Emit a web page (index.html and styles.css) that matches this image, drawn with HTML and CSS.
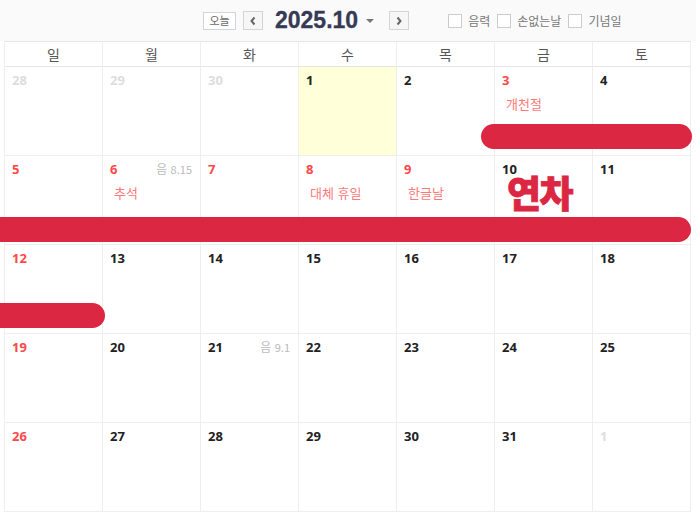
FILE: index.html
```html
<!DOCTYPE html>
<html lang="ko">
<head>
<meta charset="utf-8">
<link rel="stylesheet" href="styles.css">
</head>
<body>
<div class="page">
  <div class="toolbar">
    <button class="btn today-btn">오늘</button>
    <button class="btn nav-btn"><svg width="8" height="10" viewBox="0 0 8 10"><path d="M5.5 1.5 L2.5 5 L5.5 8.5" fill="none" stroke="#666" stroke-width="2"/></svg></button>
    <div class="title">2025.10</div>
    <span class="caret"></span>
    <button class="btn nav-btn next"><svg width="8" height="10" viewBox="0 0 8 10"><path d="M2.5 1.5 L5.5 5 L2.5 8.5" fill="none" stroke="#666" stroke-width="2"/></svg></button>
    <div class="opts">
      <label class="opt"><span class="box"></span>음력</label>
      <label class="opt"><span class="box"></span>손없는날</label>
      <label class="opt"><span class="box"></span>기념일</label>
    </div>
  </div>
  <div class="cal">
    <div class="grid">
      <div class="wd">일</div><div class="wd">월</div><div class="wd">화</div><div class="wd">수</div><div class="wd">목</div><div class="wd">금</div><div class="wd">토</div>

      <div class="cell"><span class="num other">28</span></div>
      <div class="cell"><span class="num other">29</span></div>
      <div class="cell"><span class="num other">30</span></div>
      <div class="cell today"><span class="num">1</span></div>
      <div class="cell"><span class="num">2</span></div>
      <div class="cell"><span class="num red">3</span><span class="hol">개천절</span></div>
      <div class="cell"><span class="num">4</span></div>

      <div class="cell"><span class="num red">5</span></div>
      <div class="cell"><span class="num red">6</span><span class="lunar">음 <small>8.15</small></span><span class="hol">추석</span></div>
      <div class="cell"><span class="num red">7</span></div>
      <div class="cell"><span class="num red">8</span><span class="hol">대체 휴일</span></div>
      <div class="cell"><span class="num red">9</span><span class="hol">한글날</span></div>
      <div class="cell"><span class="num">10</span></div>
      <div class="cell"><span class="num">11</span></div>

      <div class="cell"><span class="num red">12</span></div>
      <div class="cell"><span class="num">13</span></div>
      <div class="cell"><span class="num">14</span></div>
      <div class="cell"><span class="num">15</span></div>
      <div class="cell"><span class="num">16</span></div>
      <div class="cell"><span class="num">17</span></div>
      <div class="cell"><span class="num">18</span></div>

      <div class="cell"><span class="num red">19</span></div>
      <div class="cell"><span class="num">20</span></div>
      <div class="cell"><span class="num">21</span><span class="lunar">음 <small>9.1</small></span></div>
      <div class="cell"><span class="num">22</span></div>
      <div class="cell"><span class="num">23</span></div>
      <div class="cell"><span class="num">24</span></div>
      <div class="cell"><span class="num">25</span></div>

      <div class="cell"><span class="num red">26</span></div>
      <div class="cell"><span class="num">27</span></div>
      <div class="cell"><span class="num">28</span></div>
      <div class="cell"><span class="num">29</span></div>
      <div class="cell"><span class="num">30</span></div>
      <div class="cell"><span class="num">31</span></div>
      <div class="cell"><span class="num other">1</span></div>
    </div>
  </div>
  <div class="bar bar1"></div>
  <div class="bar bar2"></div>
  <div class="bar bar3"></div>
  <div class="leave">연차</div>
</div>
</body>
</html>
```

FILE: styles.css
```css
* { box-sizing: border-box; }
html, body { margin: 0; padding: 0; background: #fff; overflow: hidden; }
body { font-family: "Noto Sans CJK KR", "Noto Sans", sans-serif; width: 696px; height: 515px; }
.page { position: relative; width: 696px; height: 515px; overflow: hidden; }

.toolbar {
  height: 41px;
  background: #fafafa;
  display: flex;
  align-items: center;
  padding-left: 203px;
}
.btn {
  border: 1px solid #d4d4d4;
  background: #fff;
  padding: 0;
  margin: 0;
  display: flex;
  align-items: center;
  justify-content: center;
  font-family: "Noto Sans CJK KR", sans-serif;
  color: #666;
}
.today-btn { width: 33px; height: 18px; font-size: 11px; line-height: 1; }
.nav-btn { width: 20px; height: 19px; margin-left: 7px; background: #f6f6f6; }
.nav-btn.next { margin-left: 15px; }
.title {
  margin-left: 12px;
  font-family: "Liberation Sans", Arial, sans-serif;
  font-weight: bold;
  font-size: 23px;
  color: #363a55;
  line-height: 1;
  -webkit-text-stroke: 0.3px #363a55;
}
.caret {
  margin-left: 8px;
  width: 0; height: 0;
  border-left: 4px solid transparent;
  border-right: 4px solid transparent;
  border-top: 4px solid #777;
}
.opts { display: flex; align-items: center; margin-left: 39px; gap: 7px; }
.opt { display: flex; align-items: center; font-size: 12px; color: #777; }
.box { width: 14px; height: 14px; border: 1px solid #ccc; background: #fff; margin-right: 6px; }

.cal { padding-left: 4px; }
.grid {
  display: grid;
  grid-template-columns: repeat(7, 98px);
  grid-template-rows: 25px repeat(5, 89px);
  width: 687px;
  border-top: 1px solid #e6e6e6;
  border-left: 1px solid #eee;
}
.wd {
  border-right: 1px solid #eee;
  border-bottom: 1px solid #e6e6e6;
  display: flex;
  align-items: center;
  justify-content: center;
  font-size: 14px;
  color: #555;
}
.cell {
  position: relative;
  border-right: 1px solid #eee;
  border-bottom: 1px solid #eee;
  padding: 4px 0 0 7px;
  display: flex;
  flex-direction: column;
}
.cell.today { background: #ffffd9; }
.num {
  font-size: 13px;
  font-weight: bold;
  color: #222;
  line-height: 18px;
  font-family: "Noto Sans", "Noto Sans CJK KR", sans-serif;
}
.num.red { color: #ff4848; }
.num.other { color: #ddd; }
.hol {
  margin: 6px 0 0 4px;
  font-size: 13px;
  color: #ff7878;
  line-height: 18px;
}
.lunar {
  position: absolute;
  top: 5px;
  right: 8px;
  font-size: 12px;
  color: #bbb;
  line-height: 16px;
}
.lunar small { font-size: 11px; }

.bar {
  position: absolute;
  height: 25px;
  background: #dc2743;
  border-radius: 13px;
}
.bar1 { left: 481px; top: 124px; width: 211px; }
.bar2 { left: -20px; top: 217px; width: 711px; }
.bar3 { left: -20px; top: 303px; width: 125px; }
.leave {
  position: absolute;
  left: 507px;
  top: 174px;
  font-size: 37px;
  font-weight: 900;
  color: #dc2743;
  line-height: 1;
  letter-spacing: -1.5px;
  -webkit-text-stroke: 0.8px #dc2743;
}
```
